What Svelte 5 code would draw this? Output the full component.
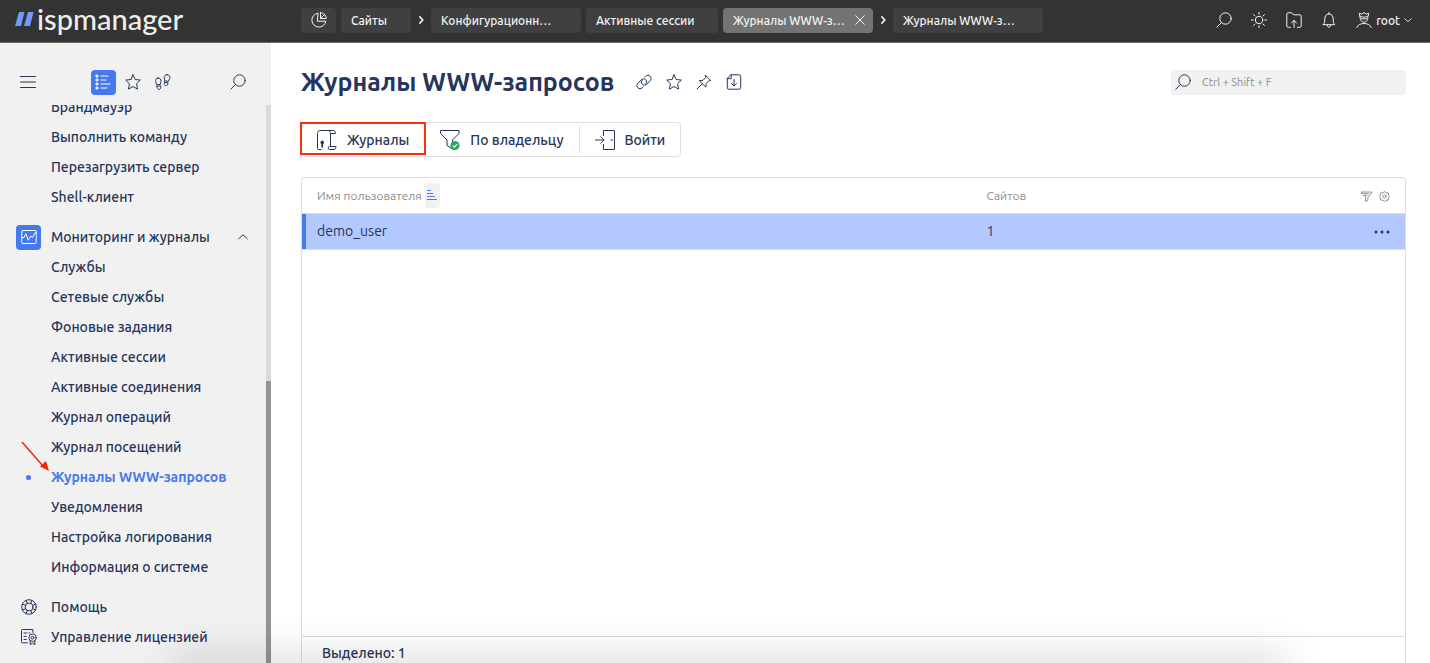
<script>
  const tabs = [
    { title: 'Сайты', size: 'short' },
    { chevron: true },
    { title: 'Конфигурационн…', size: 'long' },
    { title: 'Активные сессии', size: 'medium' },
    { title: 'Журналы WWW-з…', size: 'long', active: true },
    { chevron: true },
    { title: 'Журналы WWW-з…', size: 'long' }
  ];

  const menu = [
    { items: ['Брандмауэр', 'Выполнить команду', 'Перезагрузить сервер', 'Shell-клиент'] },
    {
      title: 'Мониторинг и журналы',
      items: [
        'Службы',
        'Сетевые службы',
        'Фоновые задания',
        'Активные сессии',
        'Активные соединения',
        'Журнал операций',
        'Журнал посещений',
        'Журналы WWW-запросов',
        'Уведомления',
        'Настройка логирования',
        'Информация о системе'
      ]
    }
  ];

  const links = [
    { title: 'Помощь', icon: 'help' },
    { title: 'Управление лицензией', icon: 'license' }
  ];

  const actions = [
    { title: 'Журналы', icon: 'scroll', marked: true },
    { title: 'По владельцу', icon: 'owner' },
    { title: 'Войти', icon: 'enter' }
  ];

  const users = [{ name: 'demo_user', sites: 1 }];

  let current = $state('Журналы WWW-запросов');
  let selected = $state(['demo_user']);
  let search = $state('');

  // share of the menu that is scrolled away
  const scrolled = 49.5;

  function toggleUser(name) {
    if (selected.includes(name)) {
      selected = selected.filter(n => n !== name);
    } else {
      selected = [...selected, name];
    }
  }
</script>

{#snippet icon(name)}
  <svg class="icon" viewBox="0 0 16 16" aria-hidden="true">
    {#if name === 'pie'}
      <path d="M6.700 1.200A7 7 0 1 0 14.800 9.200H6.700z" />
      <path d="M9.500.700v5.800h5.800A5.800 5.800 0 0 0 9.500.700zM9.500 6.500l4-4" />
    {:else if name === 'search'}
      <circle cx="9.500" cy="6.500" r="5.700" />
      <path d="M5.500 10.500L.8 15.200" />
    {:else if name === 'sun'}
      <circle cx="8" cy="8" r="3.700" />
      <path d="M8 .4v1.800M8 13.800v1.800M.4 8h1.800M13.800 8h1.800M2.600 2.600l1.300 1.300M12.100 12.100l1.300 1.300M2.600 13.400l1.300-1.300M12.100 3.900l1.300-1.300" />
    {:else if name === 'upload'}
      <path d="M4.500 15.300H2.300A1.500 1.500 0 0 1 .8 13.800V2.300A1.500 1.500 0 0 1 2.300.8h3.500l1.700 2h6.200a1.500 1.500 0 0 1 1.500 1.500v9.500a1.500 1.500 0 0 1-1.500 1.500h-2.200M8 15.500V8.500M5.500 11L8 8.300l2.500 2.700" />
    {:else if name === 'bell'}
      <path d="M8 .3v1.500M2.300 12.700h11.400c-1.200-1.400-1.500-2.400-1.500-5.700 0-3-1.600-5-4.200-5s-4.200 2-4.200 5c0 3.300-.3 4.300-1.500 5.700zM6.300 13c0 3.200 3.400 3.200 3.400 0" />
    {:else if name === 'user'}
      <path d="M3.800 4.200L3.300 1.200l2.500 1L8 .5l2.200 1.700 2.500-1-.5 3c-2.300 1.300-6.100 1.300-8.400 0zM4.300 4.500c-.8 3.300 1.200 5.700 3.700 5.700s4.500-2.400 3.700-5.700M5 6.800h6M.8 15.500c.9-2.700 3.700-4 7.200-4s6.300 1.300 7.200 4" />
    {:else if name === 'menu'}
      <path d="M.5 2.500h15M.5 8h15M.5 13.500h15" />
    {:else if name === 'list'}
      <path d="M6 2h7M6 6h5M6 10h9M6 14h6" />
      <g stroke-width="1.200">
        <circle cx="2" cy="2" r="1" /><circle cx="2" cy="6" r="1" />
        <circle cx="2" cy="10" r="1" /><circle cx="2" cy="14" r="1" />
      </g>
    {:else if name === 'star'}
      <path d="M8 .8l2.200 4.700 5.100.6-3.700 3.600.9 5.400L8 12.500l-4.500 2.600.9-5.400L.7 6.100l5.100-.6z" />
    {:else if name === 'steps'}
      <path d="M3.200 4C1 4 .3 6 .7 7.700c.3 1.300 1 2 .9 3.100l3.700-.4c-.1-1.300.7-1.800.8-3.200C6.200 5.400 5 4 3.200 4zM2 12.300l3.600-.5c.6 2.400-.3 3.500-1.500 3.600-1.300.1-2-1.100-2.100-3.100zM12.300.6c-2-.2-3.100 1.300-3.100 3 0 1.300.6 2 .5 3.200l3.700.6c0-1.200.9-1.800 1.400-3.100.5-1.700-.5-3.500-2.500-3.700zM9.500 8.200l3.600.6c-.3 2-1 3-2.300 2.800-1.200-.2-1.700-1.200-1.300-3.400z" />
    {:else if name === 'chart'}
      <rect x=".8" y="1.500" width="14.400" height="13" rx="1" />
      <path d="M1 8.500h2l1.800-3.700 2.400 6.400 2.500-4 1.800 1.300 2-4 1.600-1" />
    {:else if name === 'help'}
      <circle cx="8" cy="8" r="7.300" />
      <circle cx="8" cy="8" r="3.900" />
      <path d="M5.100 1.400l1.100 3M10.900 1.400l-1.100 3M5.100 14.600l1.100-3M10.900 14.600l-1.100-3M1.400 5.100l3 1.100M1.400 10.900l3-1.100M14.600 5.100l-3 1.100M14.600 10.900l-3-1.100" />
    {:else if name === 'license'}
      <path d="M6.500 13.800H1.500a1 1 0 0 1-1-1V1.500a1 1 0 0 1 1-1h10.300v2.800M3 4h3M8 4h1M3 7.300h2.300M3 10.500h2.300" />
      <circle cx="11.500" cy="8.700" r="3.700" />
      <circle cx="11.500" cy="8.700" r="1.400" />
      <path d="M9.200 11.800v3.800l2.300-1.500 2.300 1.500v-3.800" />
    {:else if name === 'link'}
      <path d="M9.300 10.300c1.700-1.200 1.900-3.100.5-4.500S6.500 4.600 5.200 5.900L1.900 9.200c-1.300 1.300-1.300 3.200-.1 4.500s3.200 1.300 4.500.1l.9-.9M6.700 5.700C5 6.900 4.800 8.800 6.200 10.200s3.300 1.200 4.600-.1l3.300-3.300c1.300-1.300 1.300-3.200.1-4.500s-3.200-1.300-4.500-.1l-.9.9" />
    {:else if name === 'pin'}
      <path d="M9.500 1.300l5.200 5.200-1.800.3-2.700 2.800-.4 3.600-6.500-6.500 3.700-.4 2.600-2.700zM6 10L1 15" />
    {:else if name === 'save'}
      <path d="M5.200.8h8a1.500 1.500 0 0 1 1.500 1.500v11.400a1.500 1.500 0 0 1-1.500 1.500H2.800a1.500 1.500 0 0 1-1.500-1.500V4.700zM5.200.8v3.900H1.300M8 5.500v6.300M5.500 9.500L8 12l2.500-2.500" />
    {:else if name === 'filter'}
      <path d="M.8 1.500h14.400v2.300l-5.200 4.500v5.500l-3.500 1.500V8.300M.8 1.500v2.300h10M3.500 6.500h5" />
    {:else if name === 'gear'}
      <path d="M8 .8l2 1.700 3.500.3.500 3.200 1.200 2-1.200 2-.5 3.200-3.500.3-2 1.700-2-1.700-3.500-.3L2 10 .8 8 2 6l.5-3.200L6 2.500z" />
      <circle cx="8" cy="8" r="2.500" />
    {/if}
  </svg>
{/snippet}

{#snippet actionIcon(name)}
  <svg class="action-icon" viewBox="0 0 20 20" aria-hidden="true">
    {#if name === 'scroll'}
      <path d="M4.500 19.500H1.500a1 1 0 0 1-1-1V3.500c0-1.800 1-3 2.800-3H16c1.500 0 2.500 1 2.500 3h-5v13M3.300.5H11c1.700 0 2.500 1.200 2.500 3M12.500 16.500h6.500c0 2-.7 3-2 3h-4.500c-1.800 0-1.800-3 0-3z" />
      <path class="solid" d="M5.200 10.500a1.900 1.900 0 0 1 .9 3.500v3.500H4.300V14a1.900 1.900 0 0 1 .9-3.500z" />
    {:else if name === 'owner'}
      <path d="M.5.500h18.500v3L12.500 10v9L7 15.500V10L.5 3.500z" />
      <circle class="badge" cx="15" cy="15.500" r="4.500" />
      <path class="tick" d="M12.900 15.600l1.500 1.500 2.800-3" />
    {:else if name === 'enter'}
      <path d="M8.500 6V.5h11v19h-11V14M0 10h9.500M5.500 6.500L9 10l-3.500 3.500M15.500 10h2.500" />
    {/if}
  </svg>
{/snippet}

{#snippet chevron(dir)}
  <svg class="chevron {dir}" viewBox="0 0 10 10" aria-hidden="true"><path d="M.5 3L5 7.200 9.500 3" /></svg>
{/snippet}

<div class="app">
  <header class="topbar">
    <a class="logo" href="#home">
      <svg viewBox="0 0 19 14" aria-hidden="true">
        <path d="M4 0h5.500L6 14H0zM13 0h5.500L15 14H9z" />
      </svg>
      ispmanager
    </a>
    <nav class="tabs">
      <button class="tab dashboard" aria-label="Панель">{@render icon('pie')}</button>
      {#each tabs as tab}
        {#if tab.chevron}
          {@render chevron('right')}
        {:else}
          <button class="tab {tab.size}" class:active={tab.active}>
            <span>{tab.title}</span>
            {#if tab.active}
              <svg class="close" viewBox="0 0 10 10" aria-hidden="true"><path d="M.5.500l9 9M9.500.500l-9 9" /></svg>
            {/if}
          </button>
        {/if}
      {/each}
    </nav>
    <div class="tools">
      <button aria-label="Поиск">{@render icon('search')}</button>
      <button aria-label="Тема">{@render icon('sun')}</button>
      <button aria-label="Загрузка">{@render icon('upload')}</button>
      <button aria-label="Уведомления">{@render icon('bell')}</button>
      <button class="account">{@render icon('user')}<span>root</span>{@render chevron('down')}</button>
    </div>
  </header>

  <div class="body">
    <aside class="sidebar">
      <div class="side-head">
        <button aria-label="Меню">{@render icon('menu')}</button>
        <div class="modes">
          <button class="on" aria-label="Список">{@render icon('list')}</button>
          <button aria-label="Избранное">{@render icon('star')}</button>
          <button aria-label="История">{@render icon('steps')}</button>
        </div>
        <button aria-label="Поиск по меню">{@render icon('search')}</button>
      </div>
      <div class="side-scroll">
        <nav class="menu">
          {#each menu as group}
            <div class="group">
              {#if group.title}
                <button class="row">
                  <span class="mark boxed">{@render icon('chart')}</span>
                  <span class="label">{group.title}</span>
                  {@render chevron('up')}
                </button>
              {/if}
              {#each group.items as item}
                <a class="row" class:current={item === current} href="#menu" onclick={() => (current = item)}>
                  <span class="mark"></span>
                  <span class="label">{item}</span>
                </a>
              {/each}
            </div>
          {/each}
          <div class="group">
            {#each links as link}
              <a class="row" href="#link">
                <span class="mark">{@render icon(link.icon)}</span>
                <span class="label">{link.title}</span>
              </a>
            {/each}
          </div>
        </nav>
        <div class="track"><div class="thumb" style="height: {100 - scrolled}%"></div></div>
      </div>
      <svg class="arrow" viewBox="0 0 28 31" aria-hidden="true">
        <path class="shaft" d="M1 1l21 24" />
        <path class="head" d="M28 30l-9-4.500 6-5.500z" />
      </svg>
    </aside>

    <main>
      <div class="heading">
        <h1>Журналы WWW-запросов</h1>
        <div class="heading-tools">
          <button aria-label="Ссылка">{@render icon('link')}</button>
          <button aria-label="В избранное">{@render icon('star')}</button>
          <button aria-label="Закрепить">{@render icon('pin')}</button>
          <button aria-label="Сохранить">{@render icon('save')}</button>
        </div>
        <label class="search">
          {@render icon('search')}
          <input type="text" aria-label="Поиск" placeholder="Ctrl + Shift + F" bind:value={search} />
        </label>
      </div>

      <div class="actions">
        {#each actions as action}
          <button class:marked={action.marked}>
            {@render actionIcon(action.icon)}
            {action.title}
          </button>
        {/each}
      </div>

      <section class="grid">
        <table>
          <thead>
            <tr>
              <th class="name">
                <span class="sortable">
                  Имя пользователя
                  <button class="sort" aria-label="Сортировка">
                    <svg viewBox="0 0 10 11" aria-hidden="true"><path d="M0 .5h4M0 3.500h6M0 6.500h8M0 9.500h10" /></svg>
                  </button>
                </span>
              </th>
              <th>Сайтов</th>
              <th class="end">
                <button aria-label="Фильтр">{@render icon('filter')}</button>
                <button aria-label="Настройки">{@render icon('gear')}</button>
              </th>
            </tr>
          </thead>
          <tbody>
            {#each users as user}
              <tr class:selected={selected.includes(user.name)} onclick={() => toggleUser(user.name)}>
                <td>{user.name}</td>
                <td>{user.sites}</td>
                <td class="end">
                  <button aria-label="Ещё">
                    <svg class="dots" viewBox="0 0 16 4" aria-hidden="true">
                      <circle cx="2" cy="2" r="1.500" /><circle cx="8" cy="2" r="1.500" /><circle cx="14" cy="2" r="1.500" />
                    </svg>
                  </button>
                </td>
              </tr>
            {/each}
          </tbody>
        </table>
        <footer>Выделено: {selected.length}</footer>
      </section>
    </main>
  </div>
  <div class="shade"></div>
</div>

<style>
  :global(body) {
    background: #fff;
    overflow: hidden;
  }

  .app {
    display: flex;
    flex-direction: column;
    height: 100vh;
    overflow: hidden;
    position: relative;
    font-family: Ubuntu, 'Noto Sans', sans-serif;
    font-size: 14px;
    color: #25355b;
  }

  button {
    display: flex;
    align-items: center;
    justify-content: center;
    padding: 0;
    border: none;
    background: none;
    color: inherit;
    font: inherit;
    cursor: pointer;
  }

  a {
    color: inherit;
    text-decoration: none;
  }

  svg {
    flex: none;
    fill: none;
    stroke: currentColor;
  }

  .icon {
    width: 16px;
    height: 16px;
    stroke-linejoin: round;
    stroke-linecap: round;
  }

  .chevron {
    width: 10px;
    height: 10px;
  }

  .chevron.right {
    transform: rotate(-90deg);
  }

  .chevron.up {
    transform: rotate(180deg);
  }

  /* top bar */
  .topbar {
    display: flex;
    align-items: center;
    height: 40px;
    padding: 0 18px 2px 15px;
    border-bottom: 1px solid #6b6b6b;
    background: #333;
    color: #f2f2f2;
    flex: none;
  }

  .logo {
    display: flex;
    align-items: center;
    gap: 3px;
    width: 286px;
    height: 36px;
    padding-bottom: 3px;
    flex: none;
    font-family: Lato, sans-serif;
    font-size: 29px;
    font-weight: 500;
    line-height: 32px;
    color: #eee;
  }

  .logo svg {
    width: 19px;
    height: 14px;
    fill: #6f9bff;
    stroke: none;
  }

  .tabs {
    display: flex;
    align-items: center;
    gap: 5px;
    flex: 1;
    min-width: 0;
  }

  .tabs .chevron {
    stroke-width: 2;
    width: 10px;
    height: 8px;
  }

  .tab {
    justify-content: space-between;
    height: 25px;
    padding: 0 8px 0 10px;
    border-radius: 4px;
    background: #404040;
    font-size: 12px;
    font-weight: 500;
    white-space: nowrap;
  }

  .tab.dashboard {
    width: 35px;
    padding: 0;
    justify-content: center;
  }

  .tab.short {
    width: 70px;
  }

  .tab.medium {
    width: 132px;
  }

  .tab.long {
    width: 150px;
  }

  .tab.active {
    background: #737373;
  }

  .close {
    width: 10px;
    height: 10px;
  }

  .tools {
    display: flex;
    align-items: center;
    gap: 19px;
  }

  .account {
    gap: 4px;
    font-size: 12px;
    font-weight: 500;
  }

  .account .chevron {
    width: 8px;
    height: 8px;
  }

  .body {
    display: flex;
    flex: 1;
    min-height: 0;
  }

  /* sidebar */
  .sidebar {
    position: relative;
    display: flex;
    flex-direction: column;
    width: 271px;
    flex: none;
    background: #f1f1f1;
  }

  .side-head {
    display: flex;
    align-items: center;
    justify-content: space-between;
    height: 36px;
    padding: 21px 25px 5px 20px;
    flex: none;
  }

  .modes {
    display: flex;
    gap: 5px;
  }

  .modes button {
    width: 25px;
    height: 25px;
    border-radius: 4px;
  }

  .modes .on,
  .boxed {
    background: #4678ee;
    color: #fff;
  }

  .side-scroll {
    display: flex;
    flex: 1;
    min-height: 0;
    overflow: hidden;
  }

  .menu {
    flex: 1;
    margin-top: -13px;
  }

  .group {
    margin-bottom: 10px;
  }

  .row {
    display: flex;
    align-items: center;
    justify-content: flex-start;
    gap: 10px;
    width: 100%;
    height: 30px;
    padding: 0 18px 0 16px;
    box-sizing: border-box;
    font-weight: 500;
    white-space: nowrap;
  }

  .label {
    flex: 1;
    text-align: left;
  }

  .mark {
    display: flex;
    align-items: center;
    justify-content: center;
    width: 25px;
    height: 25px;
    border-radius: 4px;
    flex: none;
  }

  .current {
    color: #4678ee;
    font-weight: 700;
  }

  .current .mark::before {
    content: '';
    width: 5px;
    height: 5px;
    border-radius: 50%;
    background: #4678ee;
  }

  .track {
    display: flex;
    flex-direction: column;
    justify-content: flex-end;
    width: 5px;
    background: #dadada;
  }

  .thumb {
    background: #959595;
  }

  .arrow {
    position: absolute;
    left: 21px;
    top: 398px;
    width: 28px;
    height: 31px;
  }

  .shaft {
    stroke: #f5230c;
    stroke-width: 1.5;
  }

  .head {
    fill: #f5230c;
    stroke: none;
  }

  /* content */
  main {
    display: flex;
    flex-direction: column;
    flex: 1;
    min-width: 0;
    padding: 21px 24px 0 30px;
  }

  .heading {
    display: flex;
    align-items: center;
    height: 36px;
  }

  h1 {
    margin: 0;
    font-size: 25px;
    font-weight: 600;
    line-height: 36px;
    white-space: nowrap;
  }

  .heading-tools {
    display: flex;
    gap: 14px;
    margin-left: 22px;
  }

  .search {
    display: flex;
    align-items: center;
    gap: 11px;
    width: 235px;
    height: 25px;
    margin-left: auto;
    padding: 0 4px;
    box-sizing: border-box;
    border-radius: 4px;
    background: #f1f1f1;
  }

  .search input {
    flex: 1;
    min-width: 0;
    padding: 0;
    border: none;
    outline: none;
    background: none;
    color: inherit;
    font: inherit;
    font-size: 11px;
  }

  .search input::placeholder {
    color: #8c8c8c;
  }

  .actions {
    display: flex;
    align-self: flex-start;
    height: 33px;
    margin: 22px 0 20px;
    border: 1px solid #e0e0e0;
    border-radius: 4px;
  }

  .actions button {
    position: relative;
    gap: 10px;
    padding: 0 15px;
    font-weight: 500;
  }

  .actions button + button {
    padding-left: 16px;
  }

  .actions button + button::before {
    content: '';
    position: absolute;
    left: 0;
    top: 3px;
    bottom: 3px;
    border-left: 1px solid #ddd;
  }

  .actions .marked::after {
    content: '';
    position: absolute;
    inset: -1px -2px 1px -2px;
    border: 2px solid #f5300f;
    z-index: 1;
  }

  .action-icon {
    width: 20px;
    height: 20px;
  }

  .solid {
    fill: currentColor;
    stroke: none;
  }

  .badge {
    fill: #1fae5b;
    stroke: none;
  }

  .tick {
    stroke: #fff;
    stroke-width: 1.2;
  }

  .grid {
    display: flex;
    flex-direction: column;
    justify-content: space-between;
    flex: 1;
    border: 1px solid #ddd;
    border-bottom: none;
    border-radius: 4px 4px 0 0;
  }

  table {
    width: 100%;
    border-collapse: collapse;
    table-layout: fixed;
  }

  th,
  td {
    height: 35px;
    padding: 0 15px;
    box-sizing: border-box;
    border-bottom: 1px solid #ddd;
    text-align: left;
  }

  td {
    height: 36px;
  }

  th {
    color: #8c8c8c;
    font-size: 12px;
    font-weight: 400;
  }

  th.name {
    width: 60.7%;
  }

  .end {
    text-align: right;
  }

  .end button {
    display: inline-flex;
    margin-left: 4px;
    vertical-align: middle;
  }

  .end .icon {
    width: 11px;
    height: 11px;
    stroke-width: 1.4;
  }

  .sortable {
    display: flex;
    align-items: center;
    gap: 3px;
  }

  .sort {
    width: 15px;
    height: 25px;
    border-radius: 4px;
    background: #f1f1f1;
    color: #4678ee;
  }

  .sort svg {
    width: 10px;
    height: 11px;
  }

  .selected {
    background: #b3c8ff;
  }

  .selected td:first-child {
    box-shadow: inset 4px 0 #4678ee;
  }

  .dots {
    width: 16px;
    height: 4px;
    fill: currentColor;
    stroke: none;
  }

  footer {
    height: 27px;
    padding: 6px 20px 0;
    box-sizing: border-box;
    border-top: 1px solid #ddd;
    font-weight: 500;
    line-height: 20px;
  }

  .shade {
    position: absolute;
    left: 12%;
    right: 10%;
    bottom: -10px;
    height: 10px;
    box-shadow: 0 0 40px rgba(0, 0, 0, 0.4);
    pointer-events: none;
  }
</style>
